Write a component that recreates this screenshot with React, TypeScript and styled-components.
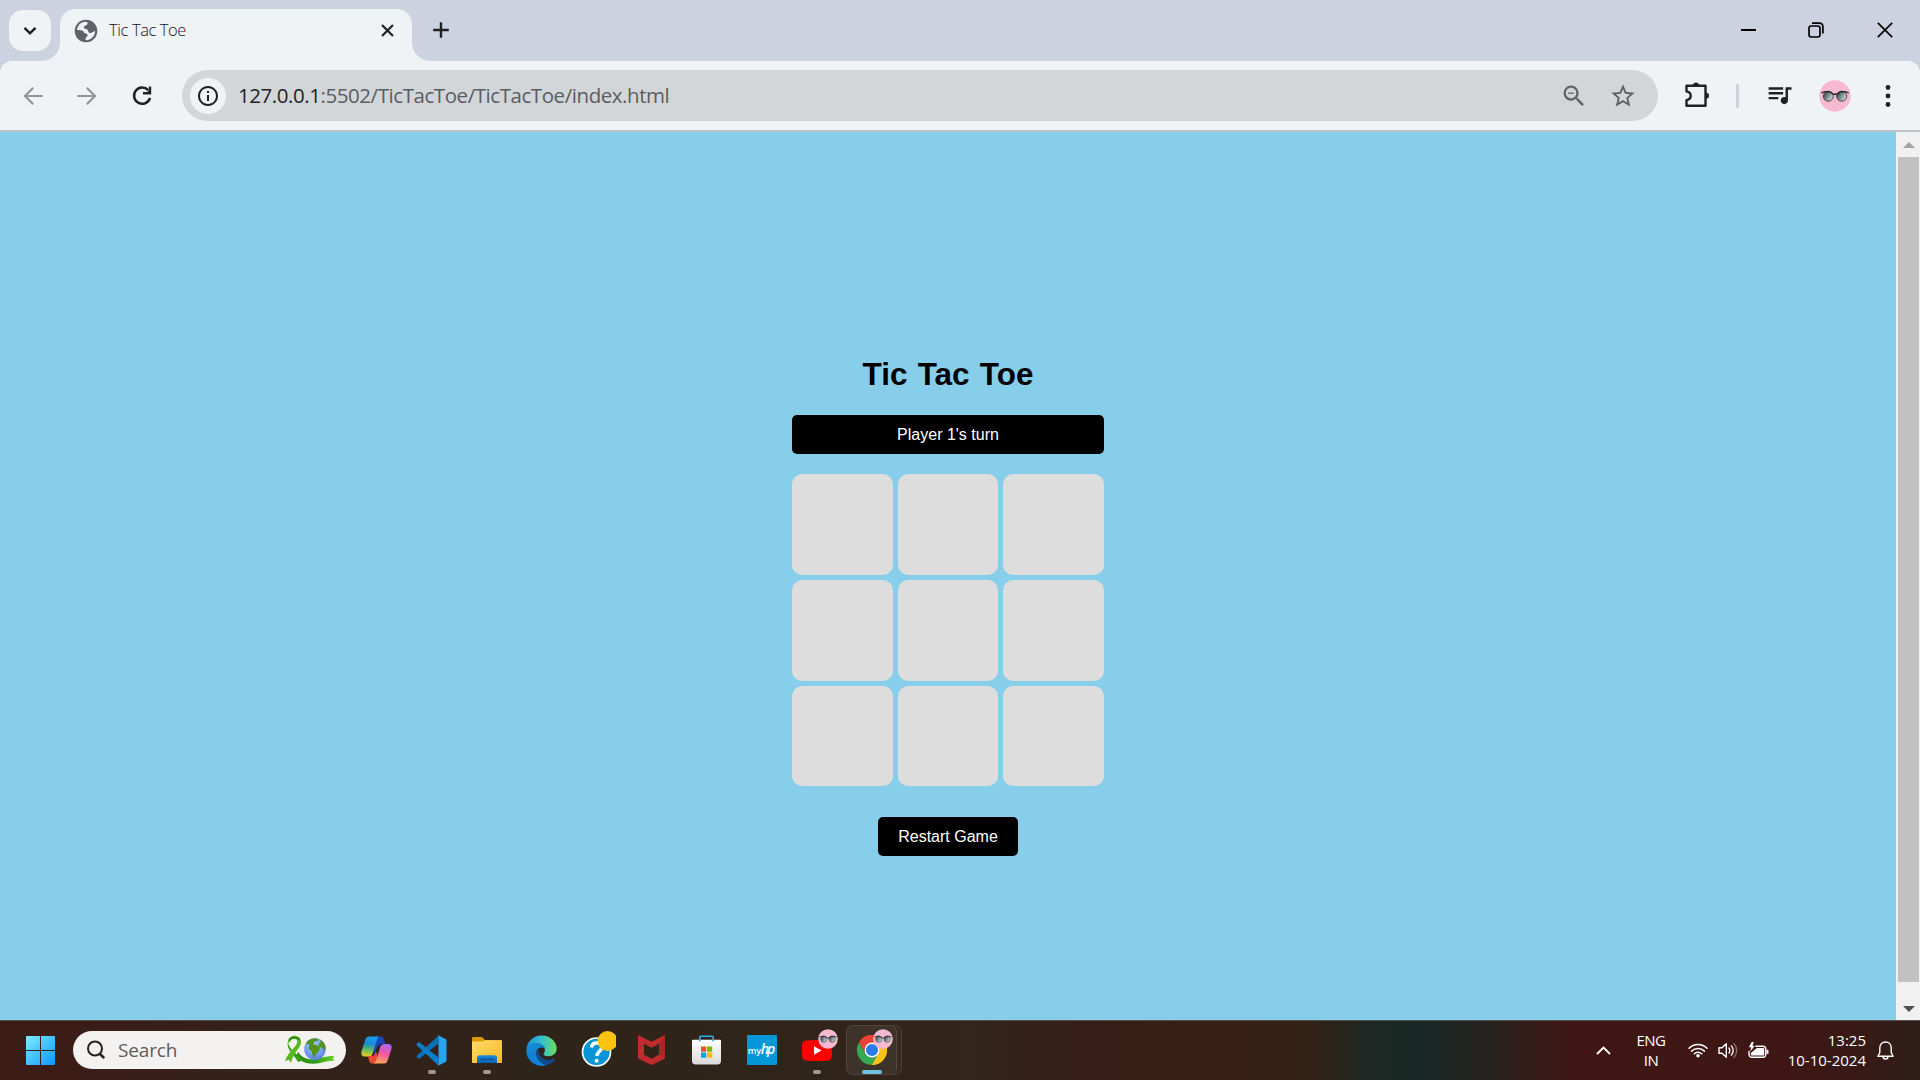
import React from "react";
import styled, { createGlobalStyle, css } from "styled-components";
import { MdInfoOutline, MdQueueMusic, MdStarBorder, MdZoomOut } from "react-icons/md";

const GlobalStyle = createGlobalStyle`
  * { box-sizing: border-box; }
  html, body { margin: 0; padding: 0; overflow: hidden; }
  button { border: 0; padding: 0; margin: 0; background: none; font: inherit; color: inherit; }
  svg { display: block; flex: none; }
`;

const uiFont = `"Open Sans", "Noto Sans", sans-serif`;

const Screen = styled.div`
  width: 1920px;
  height: 1080px;
  display: flex;
  flex-direction: column;
  background: #ccd2df;
  font-family: ${uiFont};
`;

/* ---------- Tab strip ---------- */

const TabStrip = styled.header`
  height: 61px;
  flex: none;
  display: flex;
  align-items: flex-start;
  padding: 9px 0 0 9px;
  background: #ccd2df;
`;

const TabSearch = styled.button`
  width: 42px;
  height: 41px;
  margin: 1px 9px 0 0;
  border-radius: 14px;
  background: #eff3f6;
  display: grid;
  place-items: center;
`;

const Tab = styled.div`
  position: relative;
  width: 352px;
  height: 52px;
  padding: 0 14px;
  border-radius: 15px 15px 0 0;
  background: #eff3f6;
  display: flex;
  align-items: center;
  padding-bottom: 9px;

  &::before,
  &::after {
    content: "";
    position: absolute;
    bottom: 0;
    width: 18px;
    height: 18px;
  }
  &::before {
    left: -18px;
    background: radial-gradient(circle at 0 0, transparent 17.5px, #eff3f6 18px);
  }
  &::after {
    right: -18px;
    background: radial-gradient(circle at 100% 0, transparent 17.5px, #eff3f6 18px);
  }
`;

const TabTitle = styled.span`
  flex: 1;
  margin: 0 0 2px 11px;
  font-size: 16.5px;
  line-height: 22px;
  letter-spacing: -0.4px;
  font-weight: 300;
  color: #141517;
`;

const StripButton = styled.button<{ $w: number }>`
  width: ${(p) => p.$w}px;
  height: 42px;
  display: grid;
  place-items: center;
`;

const WindowControls = styled.div`
  margin-left: auto;
  display: flex;
`;

/* ---------- Toolbar ---------- */

const Toolbar = styled.div`
  height: 71px;
  flex: none;
  display: flex;
  align-items: center;
  background: #eff3f6;
  border-radius: 12px 12px 0 0;
  border-bottom: 2px solid #c0c2c5;
  color: #1f2124;
`;

const ToolButton = styled.button<{ $w: number; $lift?: number }>`
  width: ${(p) => p.$w}px;
  height: 40px;
  flex: none;
  padding-bottom: ${(p) => (p.$lift ?? 0) * 2}px;
  display: grid;
  place-items: center;
`;

const NavGroup = styled.nav`
  display: flex;
  flex: none;
  width: 182px;
  padding-left: 6px;
`;

const Omnibox = styled.div`
  width: 1476px;
  height: 51px;
  flex: none;
  border-radius: 26px;
  background: #d2d6d9;
  display: flex;
  align-items: center;
  padding: 0 11px 0 8px;
`;

const SiteInfo = styled.span`
  width: 36px;
  height: 36px;
  border-radius: 50%;
  background: #eff3f6;
  display: grid;
  place-items: center;
`;

const Url = styled.span`
  flex: 1;
  margin: 0 0 1px 12px;
  font-size: 20.5px;
  line-height: 28px;
  letter-spacing: -0.44px;
  color: #5a5d61;
`;

const Host = styled.span`
  color: #1f2124;
`;

const OmniAction = styled.span`
  width: 49px;
  display: grid;
  place-items: center;
  color: #5f6265;
`;

const Divider = styled.span`
  width: 3px;
  height: 24px;
  flex: none;
  border-radius: 1px;
  background: #cbd3df;
`;

const ToolbarActions = styled.div`
  flex: 1;
  display: flex;
  align-items: center;
`;

/* ---------- Page ---------- */

const Viewport = styled.div`
  height: 888px;
  flex: none;
  display: flex;
`;

const Page = styled.main`
  flex: 1;
  background: #87ceeb;
  font-family: "Liberation Sans", Arial, sans-serif;
  display: flex;
  flex-direction: column;
  align-items: center;
  padding-top: 224px;
`;

const Title = styled.h1`
  margin: 0;
  height: 59px;
  font-size: 31.5px;
  line-height: 37px;
  font-weight: 700;
  word-spacing: 1.5px;
  white-space: nowrap;
  color: #000;
`;

const Status = styled.div`
  width: 312px;
  height: 39px;
  border-radius: 5px;
  background: #000;
  color: #fff;
  font-size: 16px;
  line-height: 39px;
  text-align: center;
`;

const Board = styled.div`
  width: 312px;
  height: 312px;
  margin-top: 20px;
  display: grid;
  grid-template-columns: 101px 100px 101px;
  grid-template-rows: 101px 101px 100px;
  gap: 5px;
`;

const Cell = styled.button`
  background: #ddd;
  border-radius: 10px;
`;

const Restart = styled.button`
  width: 140px;
  height: 39px;
  margin-top: 31px;
  border-radius: 5px;
  background: #000;
  color: #fff;
  font-size: 16px;
  line-height: 39px;
  text-align: center;
`;

const Scrollbar = styled.div`
  width: 24px;
  background: #f1f1f1;
  display: flex;
  flex-direction: column;
  align-items: center;
`;

const ScrollThumb = styled.div`
  width: 21px;
  height: 825px;
  margin-left: 1px;
  background: #c1c1c1;
`;

const ScrollArrow = styled.div<{ $h: number; $top?: number }>`
  height: ${(p) => p.$h}px;
  padding: ${(p) => p.$top ?? 0}px 0 0 1px;
  display: grid;
  place-items: center;
`;

/* ---------- Taskbar ---------- */

const Taskbar = styled.footer`
  height: 60px;
  flex: none;
  display: flex;
  align-items: center;
  padding-bottom: 1px;
  border-top: 1px solid #55504b;
  background: linear-gradient(
    90deg,
    #3b1d16 0,
    #3a1d16 110px,
    #33221a 260px,
    #33221a 400px,
    #2f241a 520px,
    #31251a 960px,
    #371f17 1080px,
    #382017 1240px,
    #332216 1310px,
    #1c2925 1375px,
    #1a2926 1425px,
    #26221f 1490px,
    #351c19 1530px,
    #3f1613 1580px,
    #3e1714 1800px,
    #351b17 1880px,
    #2d1e1a 1920px
  );
`;

const StartButton = styled.button`
  width: 73px;
  height: 58px;
  padding: 0 0 0 26px;
  display: flex;
  align-items: center;
`;

const SearchBox = styled.div`
  width: 273px;
  height: 38px;
  margin-right: 3px;
  border-radius: 19px;
  background: #f4f2f1;
  display: flex;
  align-items: center;
  padding: 0 11px 0 13px;
`;

const SearchLabel = styled.span`
  flex: 1;
  margin-left: 12px;
  font-size: 19px;
  line-height: 26px;
  letter-spacing: -0.15px;
  color: #5e5c5b;
`;

const AppSlot = styled.div<{ $active?: boolean }>`
  position: relative;
  width: 55px;
  height: 50px;
  display: grid;
  place-items: center;

  ${(p) =>
    p.$active &&
    css`
      &::before {
        content: "";
        position: absolute;
        inset: 0 -3px 0 2px;
        border-radius: 7px;
        border: 1px solid rgba(255, 255, 255, 0.09);
        background: rgba(255, 255, 255, 0.03);
      }
      &::after {
        content: "";
        position: absolute;
        inset: 0 2px 0 2px;
        border-right: 1px solid rgba(255, 255, 255, 0.12);
        border-radius: 7px;
        background: rgba(255, 255, 255, 0.04);
      }
    `}

  & > svg {
    position: relative;
    z-index: 1;
  }
`;

const Indicator = styled.span<{ $active?: boolean }>`
  position: absolute;
  z-index: 1;
  bottom: 1px;
  left: 50%;
  transform: translateX(-50%);
  width: ${(p) => (p.$active ? 20 : 8)}px;
  height: 4px;
  border-radius: 2px;
  background: ${(p) => (p.$active ? "#70c3df" : "#a09a96")};
`;

const Badge = styled.span`
  position: absolute;
  z-index: 2;
  top: 4px;
  left: 28.5px;
`;

const Tray = styled.div`
  margin-left: auto;
  display: flex;
  align-items: center;
  padding: 0 16px 0 0;
  color: #fff;
`;

const TrayItem = styled.div<{ $w: number }>`
  width: ${(p) => p.$w}px;
  display: grid;
  place-items: center;
`;

const TrayText = styled.div<{ $w: number; $align: "center" | "right"; $track: number }>`
  width: ${(p) => p.$w}px;
  padding-bottom: 1px;
  text-align: ${(p) => p.$align};
  font-size: 15px;
  line-height: 20px;
  letter-spacing: ${(p) => p.$track}px;
  white-space: nowrap;
`;

/* ---------- Drawings ---------- */

const Favicon = () => (
  <svg width="24" height="24" viewBox="0 0 24 24">
    <circle cx="12" cy="12" r="11.3" fill="#5f6368" />
    <path
      d="M3 11C3.300 6.500 6.800 3.100 11.500 2.700c2.300 0 2.800 1.500 1.700 2.800-.9 1-2.700.9-3.200 2.300-.4 1 .3 1.900 1.600 2.100 1.900.3 2.400 1 2.600 2.400.2 1.500 1.200 1.900 2.600 1.700 1.700-.3 2-1.700 4.300-1.700-.200 4.500-3.600 8.300-8.300 8.900-1.400.1-1.700-.8-1.200-1.900.5-1.200 2-1.500 2-3 0-1.300-1-1.700-2.300-2-1.600-.4-1.200-1.800-2.500-2.600-1.700-1-3.800-.7-5.800-.7z"
      fill="#eff3f6"
    />
  </svg>
);

const Back = ({ flip }: { flip?: boolean }) => (
  <svg width="20" height="20" viewBox="0 0 20 20" fill="none" stroke="#919598" strokeWidth="2.2">
    <path d={flip ? "M.5 10H18M9.800 1.800 18 10l-8.200 8.200" : "M19.500 10H2M10.200 1.800 2 10l8.200 8.200"} />
  </svg>
);

const Reload = () => (
  <svg width="22" height="22" viewBox="0 0 22 22">
    <path d="M17.200 5.200A8.100 8.100 0 1 0 19 12.800" fill="none" stroke="#1f2124" strokeWidth="2.500" />
    <path d="M20.200 1.600v7.800h-8.200V7h4.200l1.600-1.800V1.600z" fill="#1f2124" />
  </svg>
);

const Puzzle = () => (
  <svg width="26" height="26" viewBox="0 0 26 26">
    <path
      d="M2.500 3.800h19v20h-19v-5.600c2.800-.6 4.200-2.200 4.200-4.400S5.300 9.900 2.500 9.400z"
      fill="none"
      stroke="#1f2124"
      strokeWidth="2.400"
      strokeLinejoin="round"
    />
    <path d="M9 3.600a3 3 0 0 1 6 0zM22 10.700a3 3 0 0 1 0 6z" fill="#1f2124" />
  </svg>
);

const Glasses = ({ size }: { size: number }) => (
  <svg width={size} height={size} viewBox="0 0 32 32">
    <defs>
      <linearGradient id={`lens${size}`} x1="0" y1=".2" x2="1" y2=".8">
        <stop offset="0" stopColor="#33383b" />
        <stop offset=".5" stopColor="#7d9598" />
        <stop offset="1" stopColor="#dfe5e5" />
      </linearGradient>
    </defs>
    <circle cx="16" cy="16" r="15.700" fill="#f6b9d0" />
    <g fill={`url(#lens${size})`} stroke="#4a484a" strokeWidth="1">
      <circle cx="9.300" cy="16.200" r="5" />
      <circle cx="22.700" cy="16.200" r="5" />
    </g>
    <path d="M2.300 12.800 6 11.700h4.500l4 2.600h3l4-2.600H26l3.700 1.100" fill="none" stroke="#29272a" strokeWidth="1.400" />
  </svg>
);

const WindowsLogo = () => (
  <svg width="29" height="29" viewBox="0 0 29 29">
    <defs>
      <linearGradient id="win" x1="0" y1="0" x2="1" y2="1" gradientUnits="objectBoundingBox">
        <stop offset="0" stopColor="#7deeff" />
        <stop offset="1" stopColor="#0a95ff" />
      </linearGradient>
    </defs>
    <path
      d="M1 0h13v14H0V1a1 1 0 0 1 1-1zM15 0h13a1 1 0 0 1 1 1v13H15zM0 15h14v14H1a1 1 0 0 1-1-1zM15 15h14v13a1 1 0 0 1-1 1H15z"
      fill="url(#win)"
    />
  </svg>
);

const EarthDay = () => (
  <svg width="50" height="30" viewBox="0 0 50 30">
    <defs>
      <radialGradient id="sea" cx=".45" cy=".35" r=".65">
        <stop offset="0" stopColor="#a5d2fb" />
        <stop offset="1" stopColor="#5a7fec" />
      </radialGradient>
      <linearGradient id="ribbon" x1="0" x2="1" y1="0" y2="0">
        <stop offset="0" stopColor="#2f8f12" />
        <stop offset=".5" stopColor="#2f9a16" />
        <stop offset="1" stopColor="#6bd12a" />
      </linearGradient>
    </defs>
    <path d="M13 17c3.500 5 8 7.200 14 7.300 7 .1 12-3.200 22.500-3.500l-1.500 2.400 1.300 2.600c-8-.8-12 2.800-21 2.900C20.500 28.800 15 26.500 11 21z" fill="url(#ribbon)" />
    <path d="M3 6.500C3 13 11 18 17.500 25.500L13 27C9.500 20 .500 14 3 6.500z" fill="#37a012" />
    <path d="M3 8C3 3 6 .8 9.500.8S16 3 16 7c0 6-7.500 9.500-10 21L4 24.700 0 26C2.500 17.500 11.500 12 12.300 7 12.600 3 6 2.500 5.200 7z" fill="#55b81b" />
    <path d="M4 5.500C5.500 2 12.500 1.700 14.500 4.500" fill="none" stroke="#267d12" strokeWidth="1.400" />
    <circle cx="30" cy="14" r="10.800" fill="url(#sea)" />
    <path d="M20.500 9.500C22 5.500 25.500 3.400 29.500 3.200l4 .6-1 2.200-3 .6-1.500 2.900 3.500.6 3.500 2.400-1 3.800-2.500 2-1.700 4.200-2-1-1-5-3.300-2.500 1-3.500-2-2zM34.500 4.200c3.500 1.500 6 5 6.200 8.800l-1.700 3-2-3.500-3-.5-.5-3 2.500-2z" fill="#55921a" />
  </svg>
);

const Copilot = () => (
  <svg width="31" height="30" viewBox="0 0 31 30">
    <defs>
      <linearGradient id="cpA" x1=".3" y1="0" x2=".2" y2="1">
        <stop offset="0" stopColor="#169ee8" />
        <stop offset=".35" stopColor="#168bd4" />
        <stop offset=".65" stopColor="#62bb62" />
        <stop offset="1" stopColor="#f5cc16" />
      </linearGradient>
      <linearGradient id="cpB" x1=".7" y1="0" x2=".4" y2="1">
        <stop offset="0" stopColor="#ad63f4" />
        <stop offset=".5" stopColor="#ef5a9c" />
        <stop offset="1" stopColor="#ffa55c" />
      </linearGradient>
    </defs>
    <path d="M14 1.500h6c2 0 2.500 1.500 3 3L24.200 9H19l-3 3-3 9z" fill="#1746bd" />
    <path d="M8 1.500h10c-1.500 1-2 3-2.500 5l-3.500 11c-.8 3-2 4-4.500 4H3.500C1 21.500-.200 19.500.5 16.500L4 5.500C4.800 2.800 6 1.500 8 1.500z" fill="url(#cpA)" />
    <path d="M7 21h4c2.500 0 3-2 3.500-4l1.500 1v8l-2 2.500h-3c-2 0-2.600-1.500-3-3z" fill="#ec4a34" />
    <path d="M23.500 9h4c2.500 0 3.600 2 3 4.500L27 24.500C26 27.500 25 28.500 23 28.500H12.500C14.500 27.500 15 26 15.500 24l3.500-11c.8-3 2-4 4.500-4z" fill="url(#cpB)" />
  </svg>
);

const VsCode = () => (
  <svg width="31" height="31" viewBox="0 0 31 31">
    <path d="M1 20.500 22.500.500v8L4 23.300c-.8.500-1.500.400-2.100-.1l-1-1c-.5-.6-.5-1.200.1-1.700z" fill="#0a70b8" />
    <path d="M1 10.500 22.500 30.500v-8L4 7.700c-.8-.5-1.500-.4-2.100.1l-1 1c-.5.600-.5 1.200.1 1.700z" fill="#087fcc" />
    <path d="m22.500.500 7 3.400c.6.300 1 .8 1 1.500v20.200c0 .7-.4 1.200-1 1.500l-7 3.400c-.8.400-1.500.2-2-.3.800.6 2 .1 2-1V1.800c0-1.100-1.200-1.600-2-1 .5-.5 1.200-.700 2-.3z" fill="#27a5f2" />
  </svg>
);

const Explorer = () => (
  <svg width="30" height="28" viewBox="0 0 30 28">
    <defs>
      <linearGradient id="fold" x1="0" y1="0" x2="1" y2="1">
        <stop offset="0" stopColor="#ffdb6d" />
        <stop offset="1" stopColor="#f8b81c" />
      </linearGradient>
      <linearGradient id="tray" x1="0" y1="0" x2="0" y2="1">
        <stop offset="0" stopColor="#1b8bdd" />
        <stop offset="1" stopColor="#0c62b2" />
      </linearGradient>
    </defs>
    <path d="M0 2.500C0 1.500.6 1 1.500 1H9c2 0 2.500 2 4 3h15c1.500 0 2 .500 2 2v5H0z" fill="#dc9a07" />
    <path d="M0 5.500h9.500c1.500 0 2-1.300 3.500-1.300h16c.6 0 1 .3 1 .9V26c0 .7-.3 1-1 1H1c-.7 0-1-.3-1-1z" fill="url(#fold)" />
    <path d="M5 27v-5c0-2 1-2.700 2.700-2.700h14.600c1.700 0 2.700.8 2.700 2.700v5z" fill="url(#tray)" />
    <path d="M8.500 23.200h13" stroke="#084a8a" strokeWidth="1.200" />
  </svg>
);

const Edge = () => (
  <svg width="31" height="31" viewBox="0 0 31 31">
    <defs>
      <linearGradient id="egTop" x1="0" y1=".5" x2="1" y2=".5">
        <stop offset="0" stopColor="#1a94dc" />
        <stop offset=".5" stopColor="#34c0d2" />
        <stop offset="1" stopColor="#69e05c" />
      </linearGradient>
      <linearGradient id="egL" x1="0" y1="0" x2=".5" y2="1">
        <stop offset="0" stopColor="#1597dd" />
        <stop offset="1" stopColor="#0c68c6" />
      </linearGradient>
    </defs>
    <path d="M.5 14C1 6.500 7.500.5 15.500.5c9 0 15.200 6.500 15.200 13 0 5-4 7.700-8 7.700-3 0-5.200-1-5.200-2.300 0-.8 1.400-1.500 1.400-4C18.900 10.500 14 8 10 8 6 8 2.500 10 .5 14z" fill="url(#egTop)" />
    <path d="M.4 15.500C.8 11 5 8 10 8c4 0 8 2 8.800 5-6-2-9.500 2-8.500 7 1 5.500 6 9.500 10 9.800-2 .8-3.500 1-5 1C7 30.800.1 24 .4 15.500z" fill="url(#egL)" />
    <path d="M12.800 14.200c-3.500 2.800-3.300 7.500-.8 11.200 3.800 5.500 11.500 5.500 15.600 1 .9-1 1.300-1.600 1.500-2 .3-.7-.3-.9-1-.6-5.600 2.700-13.300.1-14.900-5.300-.4-1.500-.7-2.800-.4-4.300z" fill="#114a91" />
    <path d="M3 22c2.500 5.500 8 9 14 8.700l3.600-.8C16 29.500 11 25.500 10.300 20z" fill="#1484d6" />
  </svg>
);

const HelpIcon = () => (
  <svg width="38" height="38" viewBox="0 0 38 38">
    <circle cx="18.500" cy="21" r="14" fill="#0795d9" stroke="#fff" strokeWidth="1.700" />
    <path d="M13.500 16.500c.5-3.500 3-4.700 5.500-4.500 3 .2 5 2 4.800 4.500-.2 3.300-4.600 4-5 8.500" fill="none" stroke="#fff" strokeWidth="3.400" />
    <circle cx="18.600" cy="29.700" r="2" fill="#fff" />
    <circle cx="29.500" cy="10" r="10" fill="#ffc20e" />
  </svg>
);

const McAfee = () => (
  <svg width="27" height="30" viewBox="0 0 27 30">
    <path d="M0 0 13.500 6.800 27 0v23.500L13.500 30 0 23.500z" fill="#c22b2d" />
    <path d="M6 8.800 13.500 12.700 21 8.800v10.700l-7.500 4.200L6 19.500z" fill="#302419" />
    <path d="m21 8.800 6-8.800v23.500l-6-4z" fill="#a82529" />
  </svg>
);

const Store = () => (
  <svg width="29" height="30" viewBox="0 0 29 30">
    <defs>
      <linearGradient id="bag" x1="0" y1="0" x2="0" y2="1">
        <stop offset="0" stopColor="#fff" />
        <stop offset="1" stopColor="#d9d9da" />
      </linearGradient>
    </defs>
    <path d="M0 5.500C0 5 .4 4.700 1 4.700h27c.6 0 1 .3 1 .8V26c0 2-1.300 3.600-3.600 3.600H3.600C1.300 29.600 0 28 0 26z" fill="url(#bag)" />
    <path d="M7.800 6.500V2.300c0-.6.400-1 1-1h11.400c.6 0 1 .4 1 1v4.200" fill="none" stroke="#28b1ea" strokeWidth="1.600" />
    <path d="M9 11.500h5.200v5.200H9z" fill="#f25022" />
    <path d="M15 11.500h5.200v5.200H15z" fill="#7fba00" />
    <path d="M9 17.500h5.200v5.200H9z" fill="#00a4ef" />
    <path d="M15 17.500h5.200v5.200H15z" fill="#ffb900" />
  </svg>
);

const MyHpTile = styled.div`
  width: 30px;
  height: 30px;
  border-radius: 1px;
  background: #0497d8;
  color: #fff;
  display: flex;
  align-items: baseline;
  justify-content: center;
  line-height: 28px;
  font-size: 9px;
  font-weight: 600;
  letter-spacing: -0.3px;
`;

const HpMark = styled.span`
  font-family: "Open Sans", sans-serif;
  font-size: 14px;
  font-style: italic;
  font-weight: 600;
  letter-spacing: -2px;
  padding-right: 2px;
`;

const YouTube = () => (
  <svg width="30" height="31" viewBox="0 0 30 31">
    <path d="M4 5.500c7-.8 15-.8 22 0 2.500.3 3.700 1.500 3.900 4 .3 4 .3 8-.1 12-.2 2.500-1.500 3.800-3.900 4-7.200.7-14.600.7-21.800 0-2.500-.2-3.700-1.500-3.900-4-.4-4-.4-8-.1-12 .2-2.500 1.400-3.700 3.900-4z" fill="#f00" />
    <path d="m12 11.200 7.500 4.300-7.500 4.300z" fill="#fff" />
  </svg>
);

const Chrome = () => (
  <svg width="30" height="30" viewBox="0 0 48 48">
    <path d="M24 24 3.200 12A24 24 0 0 1 44.800 12z" fill="#ea4335" />
    <path d="M24 24 44.800 12A24 24 0 0 1 24 48z" fill="#fbc116" />
    <path d="M3.200 12A24 24 0 0 0 24 48l10.400-18L24 24 13.600 30z" fill="#34a853" />
    <path d="M24 12h20.800A24 24 0 0 1 24 48l10.400-18A12 12 0 0 0 24 12z" fill="#fbc116" />
    <path d="M24 12h20.800A24 24 0 0 0 3.200 12l10.400 18A12 12 0 0 1 24 12z" fill="#ea4335" />
    <circle cx="24" cy="24" r="12" fill="#fff" />
    <circle cx="24" cy="24" r="9.700" fill="#2b7bea" />
  </svg>
);

const Wifi = () => (
  <svg width="20" height="15" viewBox="0 0 20 15" fill="none" stroke="#fff" strokeWidth="1.500" strokeLinecap="round">
    <path d="M1 5.300a12.700 12.700 0 0 1 18 0M3.600 8.100a9 9 0 0 1 12.800 0M6.300 10.800a5.300 5.300 0 0 1 7.400 0" />
    <circle cx="10" cy="12.800" r="1.800" fill="#fff" stroke="none" />
  </svg>
);

const Volume = () => (
  <svg width="20" height="17" viewBox="0 0 20 17" fill="none" stroke="#fff" strokeWidth="1.400" strokeLinecap="round" strokeLinejoin="round">
    <path d="M1 5.700h3l4.300-4v13.600l-4.300-4H1z" />
    <path d="M11 6c1 1.500 1 3.500 0 5M13.400 3.900c2.300 2.700 2.300 6.500 0 9.200" />
    <path d="M16 1.800c3.600 4 3.600 9.400 0 13.400" stroke="#8b6c6a" />
  </svg>
);

const Battery = () => (
  <svg width="21" height="17" viewBox="0 0 21 17">
    <path d="M7.500 4.300H15A2.700 2.700 0 0 1 17.800 7v5.600a2.700 2.700 0 0 1-2.800 2.700H3.800A2.700 2.700 0 0 1 1 12.600V9" fill="none" stroke="#fff" strokeWidth="1.400" />
    <path d="M9 6h6.200c.6 0 1 .4 1 1v5.600c0 .6-.4 1-1 1H3.800c-.6 0-1-.4-1-1V11z" fill="#fff" />
    <path d="M18.500 7.800h1.100c.5 0 .9.400.9.900v2.200c0 .5-.4.900-.9.900h-1.100z" fill="#fff" />
    <path d="M3.700 0 .8 5.200h2.400L2 9.800l4.800-6H4.500L5.700 0z" fill="#fff" />
  </svg>
);

const Bell = () => (
  <svg width="17" height="19" viewBox="0 0 17 19" fill="none" stroke="#fff" strokeWidth="1.400" strokeLinejoin="round">
    <path d="M8.500 1C5 1 2.800 3.500 2.800 6.700v4.800L.9 15.300h15.200l-1.900-3.800V6.700C14.200 3.500 12 1 8.500 1z" />
    <path d="M6 15.500a2.500 2.500 0 0 0 5 0" />
  </svg>
);

type AppEntry = { name: string; icon: React.ReactNode; running?: boolean; active?: boolean; badge?: boolean };

const apps: AppEntry[] = [
  { name: "copilot", icon: <Copilot /> },
  { name: "code", icon: <VsCode />, running: true },
  { name: "explorer", icon: <Explorer />, running: true },
  { name: "edge", icon: <Edge /> },
  { name: "help", icon: <HelpIcon /> },
  { name: "mcafee", icon: <McAfee /> },
  { name: "store", icon: <Store /> },
  {
    name: "myhp",
    icon: (
      <MyHpTile>
        my<HpMark>hp</HpMark>
      </MyHpTile>
    ),
  },
  { name: "youtube", icon: <YouTube />, running: true, badge: true },
  { name: "chrome", icon: <Chrome />, running: true, active: true, badge: true },
];

export default function App() {
  return (
    <Screen>
      <GlobalStyle />
      <TabStrip>
        <TabSearch>
          <svg width="14" height="10" viewBox="0 0 14 10" fill="none" stroke="#1f2124" strokeWidth="2.500">
            <path d="m1.500 1.800 5.500 5.500 5.500-5.500" />
          </svg>
        </TabSearch>
        <Tab>
          <Favicon />
          <TabTitle>Tic Tac Toe</TabTitle>
          <StripButton $w={22}>
            <svg width="13" height="13" viewBox="0 0 13 13" stroke="#1f2124" strokeWidth="2.200">
              <path d="m1 1 11 11M12 1 1 12" />
            </svg>
          </StripButton>
        </Tab>
        <StripButton $w={58}>
          <svg width="16" height="16" viewBox="0 0 16 16" stroke="#1f2124" strokeWidth="2.400">
            <path d="M8 .2v15.600M.2 8h15.600" />
          </svg>
        </StripButton>
        <WindowControls>
          <StripButton $w={68}>
            <svg width="15" height="2" viewBox="0 0 15 2">
              <path d="M0 0h15v2H0z" />
            </svg>
          </StripButton>
          <StripButton $w={68}>
            <svg width="16" height="16" viewBox="0 0 16 16" fill="none" stroke="#000" strokeWidth="1.700">
              <rect x="1" y="4" width="11" height="11" rx="2.200" />
              <path d="M4 1.200h7.200c2.400 0 3.700 1.300 3.700 3.700v6.600" />
            </svg>
          </StripButton>
          <StripButton $w={70}>
            <svg width="16" height="16" viewBox="0 0 16 16" stroke="#000" strokeWidth="1.700">
              <path d="m.8.8 14.400 14.400M15.200.8.8 15.200" />
            </svg>
          </StripButton>
        </WindowControls>
      </TabStrip>

      <Toolbar>
        <NavGroup>
          <ToolButton $w={54}>
            <Back />
          </ToolButton>
          <ToolButton $w={54}>
            <Back flip />
          </ToolButton>
          <ToolButton $w={55}>
            <Reload />
          </ToolButton>
        </NavGroup>
        <Omnibox>
          <SiteInfo>
            <MdInfoOutline size={24} />
          </SiteInfo>
          <Url>
            <Host>127.0.0.1</Host>:5502/TicTacToe/TicTacToe/index.html
          </Url>
          <OmniAction>
            <MdZoomOut size={28} />
          </OmniAction>
          <OmniAction>
            <MdStarBorder size={28} />
          </OmniAction>
        </Omnibox>
        <ToolbarActions>
          <ToolButton $w={78} $lift={1}>
            <Puzzle />
          </ToolButton>
          <Divider />
          <ToolButton $w={80} $lift={1}>
            <MdQueueMusic size={29} />
          </ToolButton>
          <ToolButton $w={30}>
            <Glasses size={32} />
          </ToolButton>
          <ToolButton $w={78}>
            <svg width="6" height="24" viewBox="0 0 6 24" fill="#1f2124">
              <circle cx="3" cy="3.500" r="2.400" />
              <circle cx="3" cy="12" r="2.400" />
              <circle cx="3" cy="20.500" r="2.400" />
            </svg>
          </ToolButton>
        </ToolbarActions>
      </Toolbar>

      <Viewport>
        <Page>
          <Title>Tic Tac Toe</Title>
          <Status>Player 1's turn</Status>
          <Board>
            {Array.from({ length: 9 }, (_, i) => (
              <Cell key={i} />
            ))}
          </Board>
          <Restart>Restart Game</Restart>
        </Page>
        <Scrollbar>
          <ScrollArrow $h={25}>
            <svg width="12" height="6" viewBox="0 0 12 6" fill="#a3a3a3">
              <path d="m0 6 6-6 6 6z" />
            </svg>
          </ScrollArrow>
          <ScrollThumb />
          <ScrollArrow $h={38} $top={16}>
            <svg width="12" height="6" viewBox="0 0 12 6" fill="#505050">
              <path d="m0 0 6 6 6-6z" />
            </svg>
          </ScrollArrow>
        </Scrollbar>
      </Viewport>

      <Taskbar>
        <StartButton>
          <WindowsLogo />
        </StartButton>
        <SearchBox>
          <svg width="20" height="20" viewBox="0 0 20 20" fill="none" stroke="#242424" strokeWidth="2">
            <circle cx="9" cy="8.500" r="7" />
            <path d="m13.500 13.500 4.700 4.700" strokeWidth="2.600" />
          </svg>
          <SearchLabel>Search</SearchLabel>
          <EarthDay />
        </SearchBox>
        {apps.map((app) => (
          <AppSlot key={app.name} $active={app.active}>
            {app.icon}
            {app.badge && (
              <Badge>
                <Glasses size={20} />
              </Badge>
            )}
            {app.running && <Indicator $active={app.active} />}
          </AppSlot>
        ))}
        <Tray>
          <TrayItem $w={40}>
            <svg width="15" height="9" viewBox="0 0 15 9" fill="none" stroke="#fff" strokeWidth="1.900">
              <path d="m1 8 6.500-6.500L14 8" />
            </svg>
          </TrayItem>
          <TrayText $w={56} $align="center" $track={-0.5}>
            ENG
            <br />
            IN
          </TrayText>
          <TrayItem $w={38}>
            <Wifi />
          </TrayItem>
          <TrayItem $w={22}>
            <Volume />
          </TrayItem>
          <TrayItem $w={38}>
            <Battery />
          </TrayItem>
          <TrayText $w={89} $align="right" $track={0}>
            13:25
            <br />
            10-10-2024
          </TrayText>
          <TrayItem $w={38}>
            <Bell />
          </TrayItem>
        </Tray>
      </Taskbar>
    </Screen>
  );
}
